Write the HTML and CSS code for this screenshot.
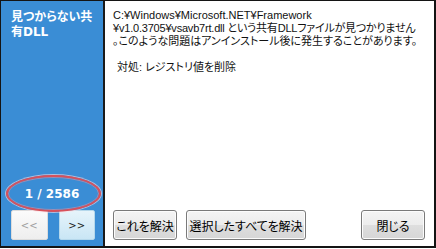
FILE: index.html
```html
<!DOCTYPE html>
<html lang="ja">
<head>
<meta charset="utf-8">
<link rel="stylesheet" href="styles.css">
</head>
<body>
<div class="win">
  <aside class="side">
    <div class="title">見つからない共<br>有DLL</div>
    <div class="counter">1 / 2586</div>
    <div class="nav">
      <button class="navbtn prev">&lt;&lt;</button>
      <button class="navbtn next">&gt;&gt;</button>
    </div>
    <div class="ring"></div>
  </aside>
  <main class="content">
    <div class="msg">
      <div class="line">C:¥Windows¥Microsoft.NET¥Framework</div>
      <div class="line tight">¥v1.0.3705¥vsavb7rt.dll という共有DLLファイルが見つかりません</div>
      <div class="line">。このような問題はアンインストール後に発生することがあります。</div>
      <div class="line blank">&nbsp;</div>
      <div class="line fix">対処: レジストリ値を削除</div>
    </div>
    <div class="actions">
      <button class="btn w1">これを解決</button>
      <button class="btn w2">選択したすべてを解決</button>
      <span class="grow"></span>
      <button class="btn w1">閉じる</button>
    </div>
  </main>
</div>
</body>
</html>
```

FILE: styles.css
```css
html, body {
  margin: 0;
  padding: 0;
  background: #ffffff;
}
.win {
  box-sizing: border-box;
  width: 436px;
  height: 248px;
  border-top: 1px solid #141414;
  border-left: 1px solid #141414;
  border-right: 2px solid #141414;
  border-bottom: 2px solid #141414;
  display: flex;
  font-family: "Liberation Sans", "Noto Sans CJK JP", sans-serif;
  font-feature-settings: "palt";
}
.side {
  position: relative;
  box-sizing: border-box;
  width: 104px;
  flex: none;
  background: #3a8dd5;
  border-right: 2px solid #1a1a1a;
  padding: 9px 8px 6px 10px;
  display: flex;
  flex-direction: column;
  color: #ffffff;
}
.title {
  font-family: "DejaVu Sans", "Noto Sans CJK JP", sans-serif;
  font-weight: bold;
  font-size: 12px;
  line-height: 15px;
  flex: 1;
}
.counter {
  font-family: "DejaVu Sans", sans-serif;
  font-weight: bold;
  font-size: 12px;
  line-height: 18px;
  text-align: center;
  margin: 0 -8px 7px -10px;
}
.nav {
  display: flex;
  gap: 11px;
}
.navbtn {
  box-sizing: border-box;
  width: 37px;
  height: 30px;
  margin: 0;
  padding: 0;
  border-radius: 2px;
  font-family: "DejaVu Sans", sans-serif;
  font-size: 10px;
}
.prev {
  background: linear-gradient(#fbfbfb, #eeeeee);
  border: 1px solid #dcdcdc;
  color: #a0a0a0;
}
.next {
  background: linear-gradient(#e6f4fb, #c9e6f5);
  border: 1px solid #b5d8ec;
  color: #222222;
}
.ring {
  position: absolute;
  left: 5px;
  top: 174px;
  width: 95px;
  height: 37px;
  box-sizing: border-box;
  border: 2px solid #d9505a;
  border-radius: 50%;
  box-shadow: 0 0 0 1px rgba(255, 220, 225, 0.6), inset 0 0 0 1px rgba(240, 150, 160, 0.5);
}
.content {
  flex: 1;
  display: flex;
  flex-direction: column;
  padding: 8px 9px 6px 8px;
  background: #ffffff;
}
.msg {
  flex: 1;
  font-size: 11px;
  line-height: 13px;
  color: #111111;
}
.line {
  white-space: nowrap;
}
.tight {
  letter-spacing: -0.2px;
}
.fix {
  padding-left: 4px;
}
.actions {
  display: flex;
  gap: 9px;
}
.grow {
  flex: 1;
}
.btn {
  box-sizing: border-box;
  height: 30px;
  margin: 0;
  padding: 0;
  border: 1px solid #7a7a7a;
  border-radius: 3px;
  background: linear-gradient(#f4f4f4 0%, #ececec 50%, #dedede 51%, #d6d6d6 100%);
  box-shadow: inset 0 0 0 1px #fcfcfc;
  font-family: "Liberation Sans", "Noto Sans CJK JP", sans-serif;
  font-feature-settings: "palt";
  font-size: 12px;
  color: #000000;
}
.w1 {
  width: 64px;
}
.w2 {
  width: 120px;
}
```
